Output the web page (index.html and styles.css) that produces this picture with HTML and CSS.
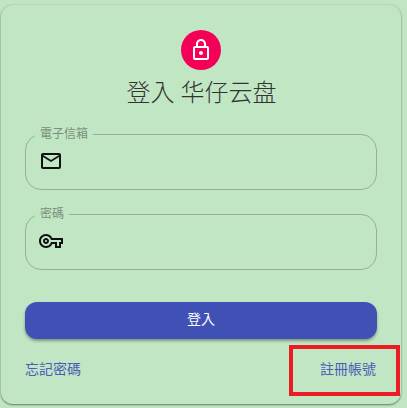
FILE: index.html
```html
<!DOCTYPE html>
<html lang="zh-Hant">
<head>
<meta charset="utf-8">
<title>登入</title>
<link rel="stylesheet" href="styles.css">
</head>
<body>
<main class="card">
  <div class="avatar">
    <svg viewBox="0 0 24 24" width="24" height="24" fill="#fff"><path d="M18 8h-1V6c0-2.76-2.24-5-5-5S7 3.24 7 6v2H6c-1.100 0-2 .9-2 2v10c0 1.100.9 2 2 2h12c1.100 0 2-.9 2-2V10c0-1.100-.9-2-2-2zM9 6c0-1.660 1.340-3 3-3s3 1.340 3 3v2H9V6zm9 14H6V10h12v10zm-6-3c1.100 0 2-.9 2-2s-.9-2-2-2-2 .9-2 2 .9 2 2 2z"/></svg>
  </div>
  <h1 class="title">登入 华仔云盘</h1>
  <form class="form">
    <fieldset class="field">
      <legend class="legend">電子信箱</legend>
      <svg class="icon" viewBox="0 0 24 24" width="24" height="24"><path d="M22 6c0-1.100-.9-2-2-2H4c-1.100 0-2 .9-2 2v12c0 1.100.9 2 2 2h16c1.100 0 2-.9 2-2V6zm-2 0-8 5-8-5h16zm0 12H4V8l8 5 8-5v10z"/></svg>
    </fieldset>
    <fieldset class="field">
      <legend class="legend">密碼</legend>
      <svg class="icon" viewBox="0 0 24 24" width="24" height="24"><path d="M22 19h-6v-4h-2.680c-1.140 2.420-3.600 4-6.320 4-3.860 0-7-3.140-7-7s3.140-7 7-7c2.720 0 5.170 1.580 6.320 4H24v6h-2v4zm-4-2h2v-4h2v-2H11.960l-.230-.67C11.030 8.340 9.140 7 7 7c-2.760 0-5 2.240-5 5s2.240 5 5 5c2.140 0 4.030-1.340 4.730-3.330l.230-.67H18v4zM7 15c-1.650 0-3-1.350-3-3s1.350-3 3-3 3 1.350 3 3-1.350 3-3 3zm0-4c-.55 0-1 .45-1 1s.45 1 1 1 1-.45 1-1-.45-1-1-1z"/></svg>
    </fieldset>
    <button class="submit" type="button">登入</button>
  </form>
  <div class="links">
    <a class="link" href="#">忘記密碼</a>
    <a class="link link-end" href="#">註冊帳號</a>
  </div>
  <div class="highlight"></div>
</main>
</body>
</html>
```
FILE: styles.css
```css
* { box-sizing: border-box; }
html, body { margin: 0; height: 100%; }
body {
  background: #c2e6c4;
  font-family: Roboto, "Noto Sans CJK TC", sans-serif;
  padding: 5px 6px 4px 1px;
}
.card {
  position: relative;
  height: 399px;
  padding: 25px 24px 0;
  background: #c1e6c3;
  border-radius: 12px;
  box-shadow: 0 1px 2px rgba(0, 0, 0, .45), 0 0 3px rgba(0, 0, 0, .1);
  display: flex;
  flex-direction: column;
  align-items: center;
}
.avatar {
  width: 40px;
  height: 40px;
  border-radius: 50%;
  background: #f50057;
  display: flex;
  align-items: center;
  justify-content: center;
  flex: none;
}
.title {
  margin: 5px 0 0;
  padding-left: 1px;
  font-size: 24px;
  line-height: 36px;
  font-weight: 300;
  color: #333;
  text-align: center;
}
.form {
  width: 100%;
  margin-top: 17px;
  display: flex;
  flex-direction: column;
  gap: 18px;
}
.field {
  margin: 0;
  height: 62px;
  padding: 0 13px;
  border: 1px solid rgba(0, 0, 0, .23);
  border-radius: 16px;
}
.legend {
  margin-left: -4px;
  padding: 0 5px;
  font-size: 12px;
  line-height: 12px;
  color: #7a8f7b;
}
.icon {
  display: block;
  margin-top: 9px;
  fill: #111;
}
.submit {
  margin-top: 14px;
  height: 37px;
  padding: 0 0 3px;
  border: 0;
  border-radius: 12px;
  background: #3f51b5;
  color: #fff;
  font: 400 14px/1 Roboto, "Noto Sans CJK TC", sans-serif;
  box-shadow: 0 2px 3px rgba(0, 0, 0, .35);
}
.links {
  width: 100%;
  margin-top: 21px;
  display: flex;
  justify-content: space-between;
}
.link {
  font-size: 14px;
  line-height: 18px;
  color: #4a5cba;
  text-decoration: none;
}
.link-end { margin-right: 1px; }
.highlight {
  position: absolute;
  left: 288px;
  top: 340px;
  width: 111px;
  height: 51px;
  border: 4px solid #ec1c24;
}
```
